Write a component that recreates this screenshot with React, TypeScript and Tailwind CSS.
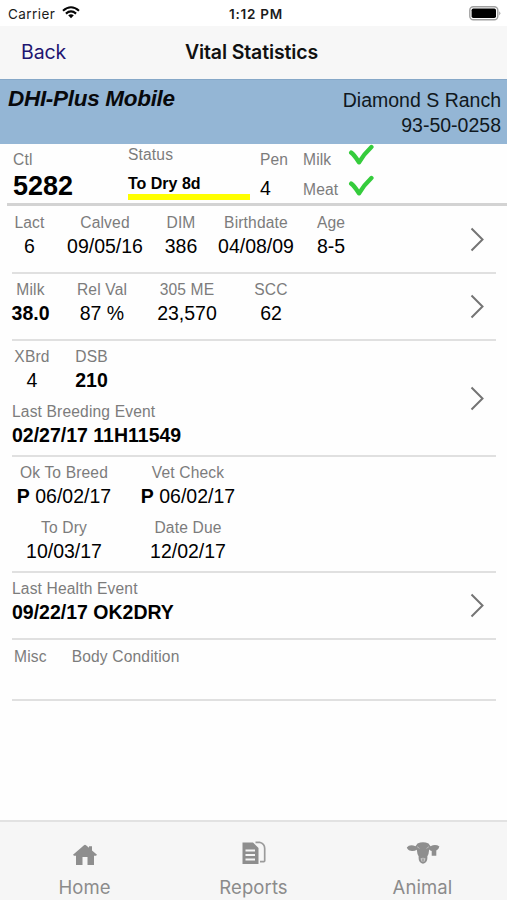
import type { ReactNode } from "react";

function Label({ children, className = "" }: { children: ReactNode; className?: string }) {
  return <div className={`h-[22px] text-[15.6px] leading-[22px] tracking-[0.15px] text-[#7c7c7c] whitespace-nowrap ${className}`}>{children}</div>;
}

function Value({ children, className = "" }: { children: ReactNode; className?: string }) {
  return <div className={`h-6 text-[19.5px] leading-6 text-black whitespace-nowrap ${className}`}>{children}</div>;
}

function Field({ label, bold = false, children }: { label: string; bold?: boolean; children: ReactNode }) {
  return (
    <div className="flex flex-col items-center">
      <Label>{label}</Label>
      <Value className={bold ? "font-bold" : ""}>{children}</Value>
    </div>
  );
}

function Chevron() {
  return (
    <svg className="mr-[11px] mb-[5px] shrink-0" width="15" height="25" viewBox="0 0 15 25" fill="none" stroke="#747474" strokeWidth="2">
      <path d="M1.5 1.5 12.5 12.5 1.5 23.5" />
    </svg>
  );
}

function Section({ className = "", chevron = false, children }: { className?: string; chevron?: boolean; children: ReactNode }) {
  return (
    <section className={`ml-3 mr-[11px] flex shrink-0 items-center justify-between border-b-2 border-[#e0e0e0] ${className}`}>
      <div className="self-start">{children}</div>
      {chevron && <Chevron />}
    </section>
  );
}

function Check() {
  return (
    <svg width="26" height="22" viewBox="0 0 26 22" fill="none" stroke="#35cc3c" strokeWidth="4.4" strokeLinecap="round" strokeLinejoin="round">
      <path d="M3.2 8.6Q6.2 10.6 11 18.3Q15.5 10.5 23.4 3" />
    </svg>
  );
}

function HomeIcon() {
  return (
    <svg width="26" height="22" viewBox="0 0 26 22" fill="#8e8e8e">
      <path d="M1 11.7 12 2.3Q13 1.4 14 2.3L17 4.8V3.3H20V7.4L25 11.7 24 12.7H22V22H15.5V14H10.5V22H4V12.7H2Z" />
    </svg>
  );
}

function ReportsIcon() {
  return (
    <svg width="26" height="24" viewBox="0 0 26 24">
      <path d="M1.5 1.5H12L17.5 7V23H1.5Z" fill="#8e8e8e" />
      <path d="M4.5 9.5H14M4.5 14H14M4.5 18.5H14" stroke="#f6f6f6" strokeWidth="2" />
      <path d="M14.5 1.3H18.5Q23.7 2.8 23.7 7.5V19.8Q23.7 20.7 22.8 20.7H19" fill="none" stroke="#9b9b9b" strokeWidth="1.7" />
    </svg>
  );
}

function CowIcon() {
  return (
    <svg width="34" height="24" viewBox="0 0 34 24" fill="#8e8e8e">
      <path d="M11.5 2.6Q17-.1 22.5 2.6L24.5 5.2Q29.5 2.8 33.4 5.5Q32.8 8.4 30.3 9.4V14.7H25.7V10Q24.2 9.4 23.2 8.4Q22.9 13 21.3 15.5Q22 21.5 17 22.8Q12 21.5 12.7 15.5Q11.1 13 10.8 8.8Q8 10.6 4.8 9.8Q1.8 9.6.8 6.6Q3.6 3 9.5 5.2Z" />
      <path d="M11 5.6 13.5 7.4M23 5.6 20.5 7.4" stroke="#b9b9b9" strokeWidth="1" />
      <path d="M14.5 17.5Q17 15.8 19.5 17.5L18.6 20.4H15.4Z" fill="#c5c5c5" />
      <path d="M17 17.5V20" stroke="#8e8e8e" strokeWidth="1.2" />
    </svg>
  );
}

function Tab({ label, icon, className }: { label: string; icon: ReactNode; className: string }) {
  return (
    <div className="flex flex-1 flex-col items-center">
      <div className="flex h-[43px] items-end justify-center pl-px">{icon}</div>
      <div className={`mt-[10px] text-[18.5px] leading-6 text-[#8b8b8b] ${className}`}>{label}</div>
    </div>
  );
}

export default function App() {
  return (
    <div className="flex h-[900px] w-[507px] flex-col overflow-hidden bg-[#fefefe] font-['Liberation_Sans',Arial,sans-serif]">
      <header className="grid h-[26px] shrink-0 grid-cols-3 items-center bg-white pt-[2px] font-['Inter',sans-serif] text-[13.5px] text-[#1c1c1c]">
        <div className="flex items-center gap-[7px] pl-2">
          <span className="tracking-[0.45px]">Carrier</span>
          <svg className="mb-[3px]" width="18" height="13" viewBox="0 0 18 13" fill="none" stroke="#050505" strokeWidth="2.1">
            <path d="M1 4.7Q9-2.2 17 4.7M3.9 7.6Q9 3.2 14.1 7.6" />
            <path d="M6.2 9.3Q9 7.1 11.8 9.3L9 12.3Z" fill="#050505" stroke="none" />
          </svg>
        </div>
        <div className="pl-[5px] text-center font-semibold tracking-[0.75px]">1:12 PM</div>
        <div className="flex justify-end pr-1.5 pb-px">
          <svg width="32" height="15" viewBox="0 0 32 15">
            <rect x=".8" y=".8" width="28" height="13" rx="3.5" fill="#fff" stroke="#a0a0a0" strokeWidth="1.4" />
            <rect x="2.6" y="2.6" width="24.4" height="9.4" rx="1.7" fill="#000" />
            <path d="M30.3 5.2Q32.4 7.3 30.3 9.4Z" fill="#999" />
          </svg>
        </div>
      </header>

      <nav className="grid h-[53px] shrink-0 grid-cols-3 items-center bg-[#f7f7f7] pt-px font-['Inter',sans-serif] text-[19.5px]">
        <div className="pl-[21px] tracking-[-0.1px] text-[#211571]">Back</div>
        <div className="pr-[4px] text-center font-semibold tracking-[-0.13px] whitespace-nowrap text-[#111]">Vital Statistics</div>
      </nav>

      <div className="flex h-[65px] shrink-0 justify-between border-t border-[#86a8c8] bg-[#94b6d5] pr-[6px] pl-2">
        <div className="pt-[5px] text-[22.5px] leading-7 font-bold tracking-[-0.3px] text-[#08090c] italic">DHI-Plus Mobile</div>
        <div className="pt-[8px] text-right text-[19.5px] leading-[25px] text-[#101820]">
          <div>Diamond S Ranch</div>
          <div>93-50-0258</div>
        </div>
      </div>

      <div className="ml-[7px] flex h-[61.5px] shrink-0 border-b-3 border-[#d3d3d3] pl-[6px]">
        <div className="w-[115px] pt-[5px]">
          <Label>Ctl</Label>
          <div className="-mt-px text-[27px] leading-8 font-bold text-black">5282</div>
        </div>
        <div className="w-[132px]">
          <Label>Status</Label>
          <div className="mt-[7px] h-[27px] w-[122px] border-b-[6px] border-[#ffff00] text-[16px] leading-[22px] font-bold text-black">To Dry 8d</div>
        </div>
        <div className="w-[43px] pt-[5px]">
          <Label>Pen</Label>
          <Value className="mt-[5px]">4</Value>
        </div>
        <div className="w-[45px] pt-[5px]">
          <Label>Milk</Label>
          <Label className="mt-[8px]">Meat</Label>
        </div>
        <div className="flex flex-col gap-[9px]">
          <Check />
          <Check />
        </div>
      </div>

      <Section className="h-[68.5px] pt-[6px]" chevron>
        <div className="grid grid-cols-[35px_116px_36px_114px_36px]">
          <Field label="Lact">6</Field>
          <Field label="Calved">09/05/16</Field>
          <Field label="DIM">386</Field>
          <Field label="Birthdate">04/08/09</Field>
          <Field label="Age">8-5</Field>
        </div>
      </Section>

      <Section className="h-[67px] pt-[5px]" chevron>
        <div className="grid grid-cols-[37px_106px_64px_104px]">
          <Field label="Milk" bold>38.0</Field>
          <Field label="Rel Val">87 %</Field>
          <Field label="305 ME">23,570</Field>
          <Field label="SCC">62</Field>
        </div>
      </Section>

      <Section className="h-[116px] pt-[5px]" chevron>
        <div className="grid grid-cols-[40px_79px]">
          <Field label="XBrd">4</Field>
          <Field label="DSB" bold>210</Field>
        </div>
        <Label className="mt-[9px]">Last Breeding Event</Label>
        <Value className="font-bold">02/27/17 11H11549</Value>
      </Section>

      <Section className="h-[116px] pt-[5px]">
        <div className="grid grid-cols-[104px_144px] gap-y-[9px]">
          <Field label="Ok To Breed"><b>P</b> 06/02/17</Field>
          <Field label="Vet Check"><b>P</b> 06/02/17</Field>
          <Field label="To Dry">10/03/17</Field>
          <Field label="Date Due">12/02/17</Field>
        </div>
      </Section>

      <Section className="h-[67px] pt-[5px]" chevron>
        <Label>Last Health Event</Label>
        <Value className="font-bold">09/22/17 OK2DRY</Value>
      </Section>

      <Section className="h-[61px] pt-[6px]">
        <div className="flex gap-[25px] pl-[2px]">
          <Label>Misc</Label>
          <Label>Body Condition</Label>
        </div>
      </Section>

      <footer className="mt-auto flex h-20 shrink-0 border-t-2 border-[#e2e2e2] bg-[#f6f6f6] font-['Inter',sans-serif]">
        <Tab label="Home" icon={<HomeIcon />} className="tracking-[0.1px]" />
        <Tab label="Reports" icon={<ReportsIcon />} className="tracking-[0.1px]" />
        <Tab label="Animal" icon={<CowIcon />} className="tracking-[0.1px]" />
      </footer>
    </div>
  );
}
